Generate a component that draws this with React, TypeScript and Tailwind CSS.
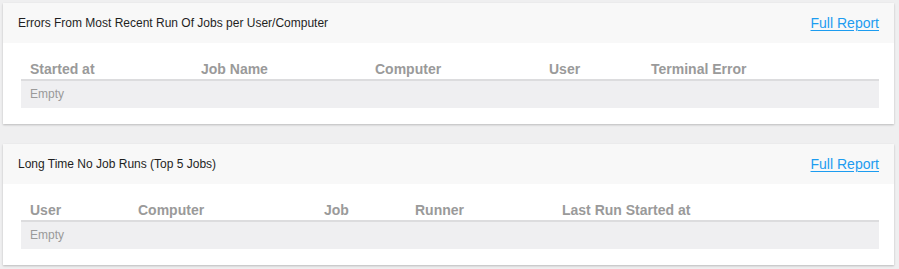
import React from "react";

type Col = { label: string; w: string };

const errorCols: Col[] = [
  { label: "Started at", w: "w-[171px]" },
  { label: "Job Name", w: "w-[174px]" },
  { label: "Computer", w: "w-[174px]" },
  { label: "User", w: "w-[102px]" },
  { label: "Terminal Error", w: "" },
];

const idleCols: Col[] = [
  { label: "User", w: "w-[108px]" },
  { label: "Computer", w: "w-[186px]" },
  { label: "Job", w: "w-[91px]" },
  { label: "Runner", w: "w-[147px]" },
  { label: "Last Run Started at", w: "" },
];

function ReportCard({ title, cols }: { title: string; cols: Col[] }) {
  return (
    <section className="bg-white shadow-[0_1px_2px_rgba(0,0,0,0.22)]">
      {/* header */}
      <div className="h-[40px] bg-[#f8f8f8] flex items-center justify-between pl-[15px] pr-[15px]">
        <div className="text-[12px] text-[#1f1f1f]">{title}</div>
        <a href="#" className="text-[14px] text-[#1c9cf0] underline underline-offset-[2px]">
          Full Report
        </a>
      </div>
      {/* table */}
      <div className="pl-[18px] pr-[15px] pt-[12px] pb-[16px]">
        <table className="w-full border-collapse table-fixed">
          <thead>
            <tr className="border-b-2 border-[#dcdcde]">
              {cols.map((c) => (
                <th
                  key={c.label}
                  className={`${c.w} text-left text-[14px] leading-[16px] font-bold text-[#9a9a9a] pl-[9px] pt-[6px] pb-[2px] whitespace-nowrap`}
                >
                  {c.label}
                </th>
              ))}
            </tr>
          </thead>
          <tbody>
            <tr className="bg-[#efeff1]">
              <td colSpan={cols.length} className="h-[28px] pl-[9px] pb-[1px] text-[12px] leading-[14px] text-[#9a9a9a]">
                Empty
              </td>
            </tr>
          </tbody>
        </table>
      </div>
    </section>
  );
}

export default function App() {
  return (
    <main className="min-h-[269px] bg-[#efeff0] pt-[3px] pl-[3px] pr-[5px] font-['Liberation_Sans',Arial,sans-serif]">
      <div className="flex flex-col gap-[20px]">
        <ReportCard title="Errors From Most Recent Run Of Jobs per User/Computer" cols={errorCols} />
        <ReportCard title="Long Time No Job Runs (Top 5 Jobs)" cols={idleCols} />
      </div>
    </main>
  );
}
